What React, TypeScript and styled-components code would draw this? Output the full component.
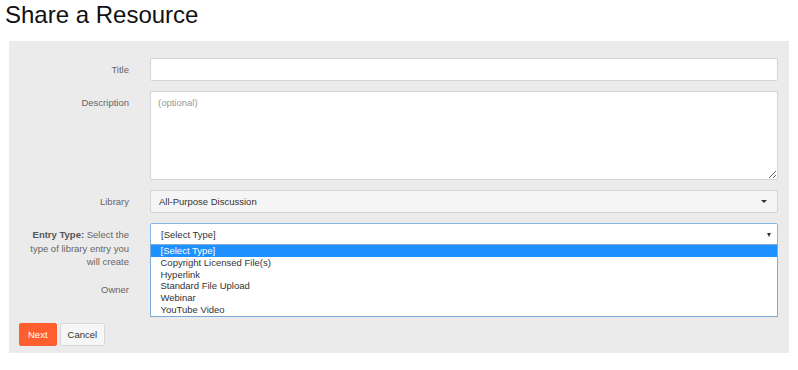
import React from 'react';
import styled, { createGlobalStyle } from 'styled-components';

const GlobalStyle = createGlobalStyle`
    body {
        margin: 0;
        background: #fff;
        font-family: "Liberation Sans", Arial, sans-serif;
    }
`;

const ENTRY_TYPES = [
    '[Select Type]',
    'Copyright Licensed File(s)',
    'Hyperlink',
    'Standard File Upload',
    'Webinar',
    'YouTube Video',
];

const Page = styled.div`
    width: 798px;
    font-family: "Liberation Sans", Arial, sans-serif;
`;

const Heading = styled.h1`
    margin: 2px 0 13px 5px;
    font-size: 24px;
    line-height: 26px;
    font-weight: normal;
    color: #111;
`;

const Panel = styled.form`
    margin: 0 9px;
    padding: 17px 11px 7px 10px;
    background: #ebebeb;
    display: flex;
    flex-direction: column;
    gap: 10px;
`;

const Row = styled.div<{ $top?: number }>`
    display: grid;
    grid-template-columns: 110px 1fr;
    column-gap: 21px;
    align-items: start;
    margin-top: ${(p) => p.$top || 0}px;
`;

const Label = styled.label`
    padding-top: 5px;
    font-size: 9.5px;
    line-height: 13.5px;
    color: #666;
    text-align: right;

    b {
        color: #555;
    }
`;

const TextInput = styled.input`
    box-sizing: border-box;
    width: 100%;
    height: 23px;
    margin: 0;
    border: 1px solid #d4d4d4;
    border-radius: 2px;
    background: #fff;
    outline: none;
`;

const TextArea = styled.textarea`
    box-sizing: border-box;
    display: block;
    width: 100%;
    height: 89px;
    margin: 0;
    padding: 5px 7px;
    border: 1px solid #d4d4d4;
    border-radius: 2px;
    font-family: "Liberation Sans", Arial, sans-serif;
    font-size: 9.5px;
    line-height: 12px;
    color: #333;
    outline: none;

    &::placeholder {
        color: #999;
    }
`;

const SelectBox = styled.div<{ $open?: boolean }>`
    position: relative;
    box-sizing: border-box;
    height: 23px;
    display: flex;
    align-items: center;
    justify-content: space-between;
    padding: 0 ${(p) => (p.$open ? 6 : 10)}px 0 ${(p) => (p.$open ? 10 : 8)}px;
    border: 1px solid ${(p) => (p.$open ? '#86b6e8' : '#d4d4d4')};
    border-radius: ${(p) => (p.$open ? '2px 2px 0 0' : '2px')};
    background: ${(p) => (p.$open ? '#fff' : '#f5f5f5')};
    font-size: 9.5px;
    color: #333;
`;

const Caret = styled.span<{ $small?: boolean }>`
    margin-left: auto;
    width: 0;
    height: 0;
    border-left: ${(p) => (p.$small ? 2.5 : 3)}px solid transparent;
    border-right: ${(p) => (p.$small ? 2.5 : 3)}px solid transparent;
    border-top: ${(p) => (p.$small ? 4 : 3)}px solid #333;
`;

const ListBox = styled.ul`
    position: absolute;
    z-index: 2;
    top: 100%;
    left: -1px;
    right: -1px;
    margin: -1px 0 0;
    padding: 0;
    list-style: none;
    background: #fff;
    border: 1px solid #7fa9d9;
`;

const Option = styled.li<{ $selected?: boolean }>`
    height: 11.75px;
    line-height: 11.75px;
    padding-left: 9.5px;
    font-size: 9.5px;
    color: ${(p) => (p.$selected ? '#fff' : '#333')};
    background: ${(p) => (p.$selected ? '#1e90ff' : 'transparent')};
    white-space: nowrap;
`;

const Buttons = styled.div`
    display: flex;
    gap: 3px;
    margin-top: 12px;
`;

const Button = styled.button<{ $primary?: boolean }>`
    height: 23px;
    padding: 0 ${(p) => (p.$primary ? 8 : 7)}px;
    border: 1px solid ${(p) => (p.$primary ? '#ff5f2e' : '#d9d9d9')};
    border-radius: 2px;
    background: ${(p) => (p.$primary ? '#ff5f2e' : '#f6f6f6')};
    color: ${(p) => (p.$primary ? '#fff' : '#333')};
    font-family: "Liberation Sans", Arial, sans-serif;
    font-size: 9.5px;
`;

export default function App() {
    const [entryType] = React.useState(0);

    return (
        <Page>
            <GlobalStyle />
            <Heading>Share a Resource</Heading>
            <Panel onSubmit={(e) => e.preventDefault()}>
                <Row>
                    <Label>Title</Label>
                    <TextInput type="text" />
                </Row>
                <Row>
                    <Label>Description</Label>
                    <TextArea placeholder="(optional)" />
                </Row>
                <Row>
                    <Label>Library</Label>
                    <SelectBox>
                        All-Purpose Discussion
                        <Caret />
                    </SelectBox>
                </Row>
                <Row>
                    <Label>
                        <b>Entry Type:</b> Select the type of library entry you will create
                    </Label>
                    <SelectBox $open>
                        [Select Type]
                        <Caret $small />
                        <ListBox>
                            {ENTRY_TYPES.map((t, i) => (
                                <Option key={t} $selected={i === entryType}>
                                    {t}
                                </Option>
                            ))}
                        </ListBox>
                    </SelectBox>
                </Row>
                <Row $top={-1}>
                    <Label>Owner</Label>
                    <SelectBox>
                        <Caret />
                    </SelectBox>
                </Row>
                <Buttons>
                    <Button $primary type="submit">Next</Button>
                    <Button type="button">Cancel</Button>
                </Buttons>
            </Panel>
        </Page>
    );
}
